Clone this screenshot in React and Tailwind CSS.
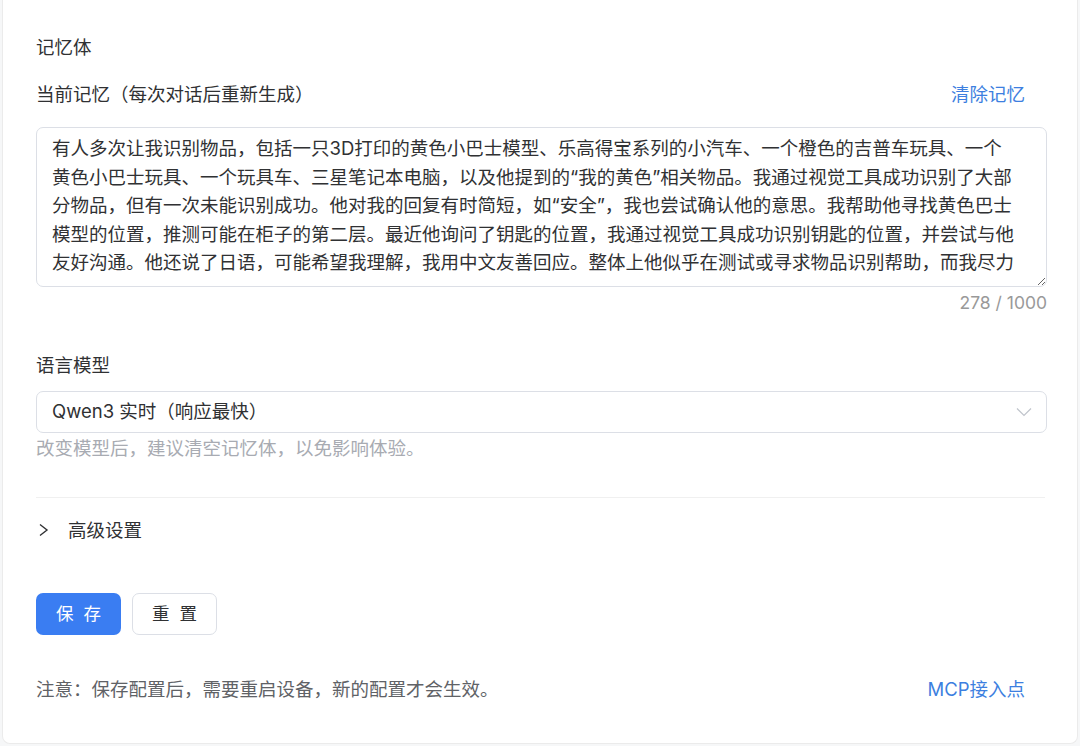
import React from "react";

const memoryText = [
  "有人多次让我识别物品，包括一只3D打印的黄色小巴士模型、乐高得宝系列的小汽车、一个橙色的吉普车玩具、一个",
  "黄色小巴士玩具、一个玩具车、三星笔记本电脑，以及他提到的“我的黄色”相关物品。我通过视觉工具成功识别了大部",
  "分物品，但有一次未能识别成功。他对我的回复有时简短，如“安全”，我也尝试确认他的意思。我帮助他寻找黄色巴士",
  "模型的位置，推测可能在柜子的第二层。最近他询问了钥匙的位置，我通过视觉工具成功识别钥匙的位置，并尝试与他",
  "友好沟通。他还说了日语，可能希望我理解，我用中文友善回应。整体上他似乎在测试或寻求物品识别帮助，而我尽力",
].join("\n");

function App() {
  return (
    <div
      className="w-full h-[746px] bg-[#f6f7f8] px-[2px] overflow-hidden"
      style={{ fontFamily: '"Inter", "Noto Sans CJK SC", "Noto Sans", sans-serif' }}
    >
      {/* 卡片 */}
      <div className="h-[744px] bg-white border border-t-0 border-[#ebebeb] rounded-b-[8px] pl-[33px] pr-[30px] pt-[34px] text-[18.5px] text-[#303133]">
        <div className="leading-[26px]">记忆体</div>

        {/* 当前记忆 */}
        <div className="flex items-center justify-between mt-[21px] leading-[26px]">
          <span>当前记忆（每次对话后重新生成）</span>
          <button className="text-[#3d7fe0] mr-[22px]">清除记忆</button>
        </div>

        <textarea
          wrap="off"
          defaultValue={memoryText}
          className="block w-full h-[160px] mt-[20px] px-[15px] pt-[6px] pb-[4px] border border-[#dcdfe6] rounded-[7px] leading-[28.5px] text-[#303133] overflow-hidden outline-none"
        />
        <div className="text-right text-[17.5px] text-[#999999] leading-[24px] mt-[4px]">
          278 / 1000
        </div>

        {/* 语言模型 */}
        <div className="leading-[26px] mt-[37px]">语言模型</div>
        <div className="flex items-center justify-between h-[42px] mt-[13px] pl-[15px] pr-[14px] border border-[#dcdfe6] rounded-[7px]">
          <span>Qwen3 实时（响应最快）</span>
          <svg width="16" height="10" viewBox="0 0 16 10" fill="none">
            <polyline points="1,1.5 8,8.5 15,1.5" stroke="#c0c4cc" strokeWidth="1.2" />
          </svg>
        </div>
        <div className="text-[#a8abb2] leading-[24px] mt-[3px]">
          改变模型后，建议清空记忆体，以免影响体验。
        </div>

        {/* 高级设置 */}
        <div className="mt-[37px] border-t border-[#f0f0f0] mr-[2px]">
          <div className="flex items-center h-[64px] leading-[26px]">
            <svg width="12" height="14" viewBox="0 0 12 14" fill="none" className="ml-[1px]">
              <polyline points="3,1.5 10,7 3,12.5" stroke="#303133" strokeWidth="1.4" />
            </svg>
            <span className="ml-[19px]">高级设置</span>
          </div>
        </div>

        {/* 按钮 */}
        <div className="flex gap-[11px] mt-[31px]">
          <button className="flex items-center justify-center gap-[10px] w-[85px] h-[42px] rounded-[7px] bg-[#3a7df2] text-white text-[17.5px]">
            <span>保</span>
            <span>存</span>
          </button>
          <button className="flex items-center justify-center gap-[10px] w-[85px] h-[42px] rounded-[7px] bg-white border border-[#dcdfe6] text-[#303133] text-[17.5px]">
            <span>重</span>
            <span>置</span>
          </button>
        </div>

        {/* 注意 */}
        <div className="flex items-center justify-between mt-[42px] leading-[24px]">
          <span className="text-[#606266]">注意：保存配置后，需要重启设备，新的配置才会生效。</span>
          <button className="text-[#3d7fe0] mr-[22px]">MCP接入点</button>
        </div>
      </div>
    </div>
  );
}

export default App;
